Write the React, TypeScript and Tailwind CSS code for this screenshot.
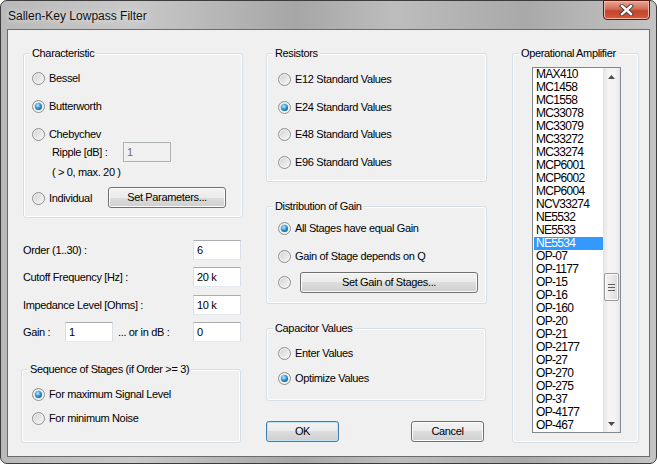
import type { ReactNode } from "react";

const amps = [
  "MAX410", "MC1458", "MC1558", "MC33078", "MC33079", "MC33272", "MC33274",
  "MCP6001", "MCP6002", "MCP6004", "NCV33274", "NE5532", "NE5533", "NE5534",
  "OP-07", "OP-1177", "OP-15", "OP-16", "OP-160", "OP-20", "OP-21", "OP-2177",
  "OP-27", "OP-270", "OP-275", "OP-37", "OP-4177", "OP-467",
];

function Radio({ checked }: { checked?: boolean }) {
  return (
    <span className="flex h-[13px] w-[13px] shrink-0 items-center justify-center rounded-full border border-[#8e8f8f] bg-[linear-gradient(135deg,#cfd0d1,#f9f9f9)] shadow-[inset_0_0_0_1px_#f3f3f3]">
      {checked && (
        <span className="h-[7px] w-[7px] rounded-full bg-[radial-gradient(circle_at_40%_35%,#c6ecff_0%,#43ace6_35%,#0f5d92_75%,#0a3c62_100%)]" />
      )}
    </span>
  );
}

function Option({ checked, label, className = "" }: { checked?: boolean; label?: string; className?: string }) {
  return (
    <div className={`flex h-[13px] items-center gap-[4px] ${className}`}>
      <Radio checked={checked} />
      {label && <span className="whitespace-nowrap">{label}</span>}
    </div>
  );
}

function Field({ value, className = "", disabled }: { value: string; className?: string; disabled?: boolean }) {
  return (
    <div
      className={`flex h-[20px] w-[48px] items-center border pl-[3px] ${
        disabled
          ? "border-[#adb2b5] bg-[#f0f0f0] text-[#6d6d6d]"
          : "border-[#abadb3] border-x-[#dbdfe6] border-b-[#e3e9ef] bg-white"
      } ${className}`}
    >
      {value}
    </div>
  );
}

function Btn({ children, className = "", def }: { children: ReactNode; className?: string; def?: boolean }) {
  return (
    <button
      className={`flex h-[21px] items-center justify-center rounded-[3px] border bg-[linear-gradient(to_bottom,#f2f2f2_0%,#ebebeb_50%,#dddddd_50%,#cfcfcf_100%)] ${
        def
          ? "border-[#3c7fb1] shadow-[inset_0_0_0_1px_#bfe3f8]"
          : "border-[#707070] shadow-[inset_0_0_0_1px_#fbfbfb]"
      } ${className}`}
    >
      {children}
    </button>
  );
}

function Group({ title, className = "", children }: { title: string; className?: string; children?: ReactNode }) {
  return (
    <div className={`relative flex flex-col rounded-[3px] border border-[#d5dfe5] shadow-[inset_0_0_0_1px_#ffffff] ${className}`}>
      <span className="absolute -top-[7px] left-[6px] bg-[#f0f0f0] px-[2px] leading-[13px] whitespace-nowrap">
        {title}
      </span>
      {children}
    </div>
  );
}

function Arrow({ up }: { up?: boolean }) {
  return (
    <div className="flex h-[17px] items-center justify-center">
      <svg width="7" height="4" viewBox="0 0 7 4">
        <path d={up ? "M0 4 L3.5 0 L7 4 Z" : "M0 0 L3.5 4 L7 0 Z"} fill="#4d4d4d" />
      </svg>
    </div>
  );
}

export default function App() {
  return (
    <div className="h-[464px] w-[657px] bg-white font-['Liberation_Sans',Arial,sans-serif] text-[11px] tracking-[-0.35px] text-black">
      <div className="flex h-[464px] w-[657px] flex-col rounded-[7px] border border-[#3c3c3c] bg-[linear-gradient(to_right,#b9b9b9_0%,#c9c9c9_20%,#a6a6a6_45%,#bdbdbd_60%,#a9a9a9_80%,#c4c4c4_100%)]">
        {/* title bar */}
        <div className="flex h-[28px] shrink-0 items-start justify-between">
          <span className="mt-[6px] pl-[7px] text-[12px] tracking-normal text-[#111] text-shadow-[0_0_6px_#ffffff]">
            Sallen-Key Lowpass Filter
          </span>
          <div className="-mt-[1px] mr-[6px] flex h-[20px] w-[47px] items-center justify-center rounded-b-[4px] border border-[#5a1a10] bg-[linear-gradient(to_bottom,#e9a795_0%,#d26b55_45%,#c2442b_55%,#d8583c_100%)] shadow-[inset_0_0_0_1px_#f1b8a8]">
            <svg width="15" height="12" viewBox="0 0 15 12">
              <path d="M3 2 L12 10 M12 2 L3 10" stroke="#3a3a3a" strokeWidth="4.2" strokeLinecap="square" />
              <path d="M3 2 L12 10 M12 2 L3 10" stroke="#ffffff" strokeWidth="2.4" strokeLinecap="square" />
            </svg>
          </div>
        </div>

        {/* client area */}
        <div className="mx-[6px] flex h-[428px] w-[643px] border border-[#6b6b6b] bg-[#f0f0f0] pl-[13px]">
          {/* left column */}
          <div className="flex w-[222px] flex-col">
            <Group title="Characteristic" className="mt-[23px] ml-[2px] h-[165px] w-[220px] pl-[8px]">
              <Option className="mt-[18px]" label="Bessel" />
              <Option className="mt-[15px]" checked label="Butterworth" />
              <Option className="mt-[15px]" label="Chebychev" />
              <div className="mt-[1px] flex h-[20px] items-center pl-[20px]">
                <span className="w-[71px]">Ripple [dB] :</span>
                <Field value="1" disabled className="w-[47px]" />
              </div>
              <div className="mt-[4px] h-[13px] pl-[20px] leading-[13px]">( &gt; 0, max. 20 )</div>
              <div className="mt-[8px] flex h-[21px] items-center">
                <div className="w-[76px]">
                  <Option label="Individual" className="mt-[2px]" />
                </div>
                <Btn className="w-[118px]">Set Parameters...</Btn>
              </div>
            </Group>

            <div className="mt-[22px] ml-[2px] flex w-[218px] flex-col">
              <div className="flex h-[20px] items-center justify-between">
                <span>Order (1..30) :</span>
                <Field value="6" />
              </div>
              <div className="mt-[7px] flex h-[20px] items-center justify-between">
                <span>Cutoff Frequency [Hz] :</span>
                <Field value="20 k" />
              </div>
              <div className="mt-[8px] flex h-[20px] items-center justify-between">
                <span>Impedance Level [Ohms] :</span>
                <Field value="10 k" />
              </div>
              <div className="mt-[7px] flex h-[20px] items-center">
                <span className="w-[42px]">Gain :</span>
                <Field value="1" />
                <span className="ml-[5px] w-[75px]">... or in dB :</span>
                <Field value="0" />
              </div>
            </div>

            <Group title="Sequence of Stages (if Order >= 3)" className="mt-[27px] h-[74px] w-[220px] pl-[10px]">
              <Option className="mt-[18px]" checked label="For maximum Signal Level" />
              <Option className="mt-[11px]" label="For minimum Noise" />
            </Group>
          </div>

          {/* middle column */}
          <div className="ml-[23px] flex w-[221px] flex-col">
            <Group title="Resistors" className="mt-[23px] h-[129px] w-[221px] pl-[11px]">
              <Option className="mt-[19px]" label="E12 Standard Values" />
              <Option className="mt-[15px]" checked label="E24 Standard Values" />
              <Option className="mt-[14px]" label="E48 Standard Values" />
              <Option className="mt-[15px]" label="E96 Standard Values" />
            </Group>

            <Group title="Distribution of Gain" className="mt-[24px] h-[98px] w-[221px] pl-[11px]">
              <Option className="mt-[15px]" checked label="All Stages have equal Gain" />
              <Option className="mt-[15px]" label="Gain of Stage depends on Q" />
              <div className="mt-[9px] flex h-[21px] items-center">
                <Radio />
                <Btn className="ml-[9px] w-[178px]">Set Gain of Stages...</Btn>
              </div>
            </Group>

            <Group title="Capacitor Values" className="mt-[24px] h-[73px] w-[220px] pl-[11px]">
              <Option className="mt-[18px]" label="Enter Values" />
              <Option className="mt-[12px]" checked label="Optimize Values" />
            </Group>

            <div className="mt-[20px] flex w-[218px] justify-between">
              <Btn def className="w-[73px]">OK</Btn>
              <Btn className="w-[73px]">Cancel</Btn>
            </div>
          </div>

          {/* right column */}
          <div className="ml-[25px] flex w-[127px] flex-col">
            <Group title="Operational Amplifier" className="mt-[23px] h-[390px] w-[127px]">
              <div className="mt-[13px] ml-[19px] flex h-[366px] w-[89px] border border-[#828790] bg-white">
                <div className="flex w-[70px] flex-col text-[12px] leading-[13px] tracking-[-0.7px]">
                  {amps.map((a) => (
                    <div
                      key={a}
                      className={`ml-[1px] h-[13px] pl-[2px] ${a === "NE5534" ? "bg-[#3399ff] text-white" : ""}`}
                    >
                      {a}
                    </div>
                  ))}
                </div>
                <div className="flex w-[17px] flex-col bg-[linear-gradient(to_right,#e3e3e3,#f4f4f4_30%,#f4f4f4_70%,#e6e6e6)]">
                  <Arrow up />
                  <div className="h-[188px]" />
                  <div className="mx-[1px] flex h-[28px] flex-col items-center justify-center gap-[2px] rounded-[2px] border border-[#9a9a9a] bg-[linear-gradient(to_right,#f4f4f4,#e9e9e9_50%,#d9d9d9)] shadow-[inset_0_0_0_1px_#fbfbfb]">
                    <span className="h-[1px] w-[7px] bg-[#5f5f5f]" />
                    <span className="h-[1px] w-[7px] bg-[#5f5f5f]" />
                    <span className="h-[1px] w-[7px] bg-[#5f5f5f]" />
                  </div>
                  <div className="flex-1" />
                  <Arrow />
                </div>
              </div>
            </Group>
          </div>
        </div>
      </div>
    </div>
  );
}
